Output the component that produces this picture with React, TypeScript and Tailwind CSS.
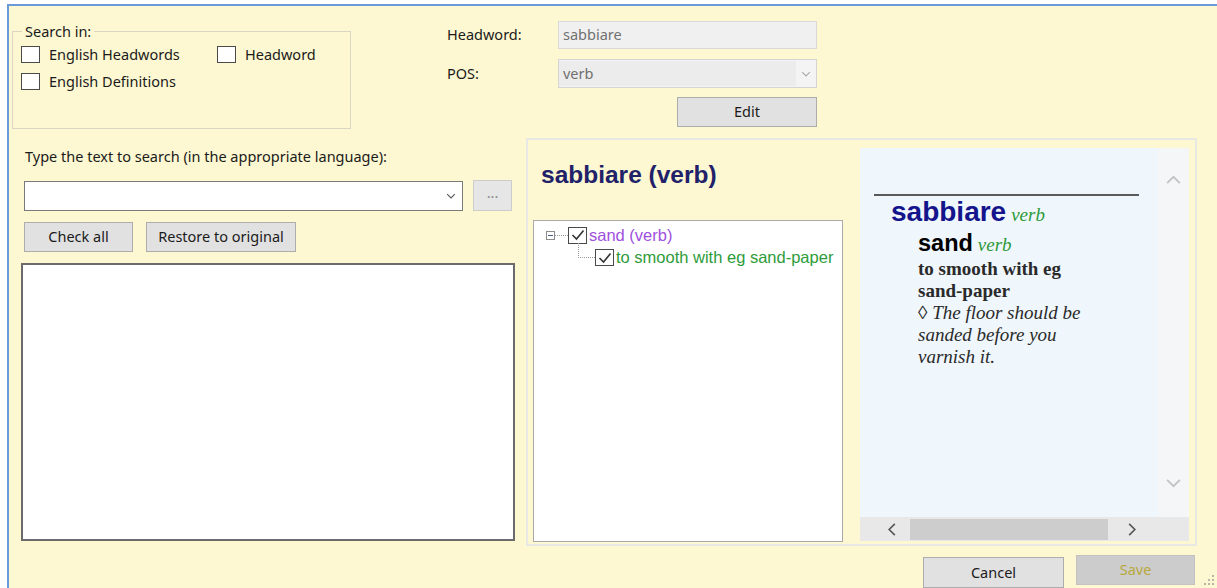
import type { ReactNode } from "react";

// little drawings used by the form controls
function Chevron({ dir, className }: { dir: "up" | "down" | "left" | "right"; className?: string }) {
  const pts = {
    up: "1,9 8,2 15,9",
    down: "1,2 8,9 15,2",
    left: "9,1 2,8 9,15",
    right: "2,1 9,8 2,15",
  }[dir];
  const box = dir === "up" || dir === "down" ? "0 0 16 11" : "0 0 11 16";
  return (
    <svg viewBox={box} className={className} fill="none" stroke="currentColor" strokeWidth={2}>
      <polyline points={pts} />
    </svg>
  );
}

function CheckBox({ checked = false }: { checked?: boolean }) {
  return (
    <span className="inline-flex h-[17px] w-[19px] shrink-0 items-center justify-center border border-[#4a4a4a] bg-white">
      {checked && (
        <svg viewBox="0 0 14 12" className="h-[12px] w-[14px]" fill="none" stroke="#333" strokeWidth={1.6}>
          <polyline points="1.5,6 5.5,10 12.5,1.5" />
        </svg>
      )}
    </span>
  );
}

function Option({ label }: { label: string }) {
  return (
    <label className="flex h-[27px] items-center gap-[9px]">
      <CheckBox />
      <span>{label}</span>
    </label>
  );
}

function Button({ children, className }: { children: ReactNode; className: string }) {
  return (
    <button className={`flex items-center justify-center border border-[#adadad] bg-[#e1e1e1] ${className}`}>
      {children}
    </button>
  );
}

function Grip() {
  const dots = [
    [8, 0],
    [4, 4],
    [8, 4],
    [0, 8],
    [4, 8],
    [8, 8],
  ];
  return (
    <svg viewBox="0 0 10 10" className="absolute bottom-[3px] right-[3px] h-[10px] w-[10px]">
      {dots.map(([x, y], i) => (
        <rect key={i} x={x} y={y} width={2} height={2} fill="#b5b5a8" />
      ))}
    </svg>
  );
}

export default function App() {
  return (
    <div className="h-[588px] w-[1217px] overflow-hidden bg-white font-['Noto_Sans',sans-serif] text-[14.5px] text-[#1b1b1b]">
      <div className="relative ml-[7px] mt-[4px] h-[584px] border-l-2 border-t-2 border-[#6b9ad8] bg-[#fdf8d1]">
        {/* search options + headword fields */}
        <div className="flex items-start">
          <fieldset className="m-0 ml-[3px] mt-[15px] h-[108px] w-[339px] min-w-0 border border-[#d9d6c2] p-0">
            <legend className="ml-[9px] px-[3px] leading-[20px]">Search in:</legend>
            <div className="grid grid-cols-[196px_auto] pl-[8px]">
              <Option label="English Headwords" />
              <Option label="Headword" />
              <Option label="English Definitions" />
            </div>
          </fieldset>

          <div className="ml-[96px] mt-[15px] flex flex-col">
            <div className="flex h-[28px] items-center">
              <span className="w-[111px]">Headword:</span>
              <div className="flex h-[28px] w-[259px] items-center border border-[#d9d9d9] bg-[#f0f0f0] pl-[4px] text-[#707070]">
                sabbiare
              </div>
            </div>
            <div className="mt-[10px] flex h-[29px] items-center">
              <span className="w-[111px]">POS:</span>
              <div className="flex h-[29px] w-[259px] items-center border border-[#d4d4d4] bg-[#f4f4f4]">
                <span className="flex h-[25px] flex-1 items-center bg-[#ececec] pl-[4px] text-[#707070]">verb</span>
                <span className="flex w-[20px] justify-center text-[#a8a8a8]">
                  <Chevron dir="down" className="h-[6px] w-[10px]" />
                </span>
              </div>
            </div>
            <Button className="mt-[9px] h-[30px] w-[140px] self-end">Edit</Button>
          </div>
        </div>

        {/* search box and results */}
        <div className="mt-[9px] flex items-start">
          <div className="ml-[12px] flex w-[494px] flex-col">
            <span className="mt-[8px] pl-[4px] leading-[20px]">Type the text to search (in the appropriate language):</span>
            <div className="mt-[15px] flex items-center">
              <div className="ml-[3px] flex h-[30px] w-[439px] items-center justify-end border border-[#7a7a7a] bg-white pr-[6px] text-[#555]">
                <Chevron dir="down" className="h-[6px] w-[10px]" />
              </div>
              <button className="ml-[10px] -mt-[2px] flex h-[31px] w-[39px] items-center justify-center border border-[#cccccc] bg-[#e6e6e6] pb-[4px] text-[#8a8a8a]">
                ...
              </button>
            </div>
            <div className="mt-[11px] flex gap-[13px] pl-[3px]">
              <Button className="h-[30px] w-[109px]">Check all</Button>
              <Button className="h-[30px] w-[150px]">Restore to original</Button>
            </div>
            <div className="mt-[11px] h-[278px] w-full border-2 border-[#6b6b6b] bg-white" />
          </div>

          <div className="ml-[11px] flex h-[408px] w-[671px] border-2 border-[#e8e8e4]">
            <div className="flex w-[315px] flex-col pl-[5px]">
              <div className="ml-[8px] mt-[20px] flex h-[30px] items-center font-['Liberation_Sans',sans-serif] text-[24.5px] font-bold text-[#21216a]">
                sabbiare (verb)
              </div>
              <div className="mt-[30px] h-[322px] w-[310px] border border-[#a9a9a9] bg-white pt-[3px] font-['Liberation_Sans',sans-serif] text-[16.5px]">
                <div className="flex h-[22px] items-center pl-[12px]">
                  <span className="flex h-[9px] w-[9px] items-center justify-center border border-[#8c8c8c]">
                    <span className="h-px w-[5px] bg-[#4a5e8a]" />
                  </span>
                  <span className="w-[13px] border-t border-dotted border-[#9a9a9a]" />
                  <CheckBox checked />
                  <span className="ml-[2px] text-[#a050de]">sand (verb)</span>
                </div>
                <div className="flex h-[23px] items-center pl-[44px]">
                  <span className="-mt-[3px] h-[15px] w-[17px] self-start border-b border-l border-dotted border-[#9a9a9a]" />
                  <CheckBox checked />
                  <span className="ml-[2px] text-[#2e9b3a]">to smooth with eg sand-paper</span>
                </div>
              </div>
            </div>

            {/* rendered entry preview */}
            <div className="ml-[17px] mt-[8px] flex h-[393px] w-[329px] flex-col bg-[#eff6fc]">
              <div className="flex flex-1">
                <div className="flex-1 pl-[14px] pt-[46px]">
                  <div className="h-[2px] w-[265px] bg-[#5a5a5a]" />
                  <div className="pl-[17px] leading-[32px]">
                    <span className="font-['Liberation_Sans',sans-serif] text-[28px] font-bold text-[#14148c]">sabbiare</span>
                    <span className="ml-[5px] font-['Liberation_Serif',serif] text-[19px] italic text-[#2e9b3a]">verb</span>
                  </div>
                  <div className="-mt-px pl-[44px] leading-[26px]">
                    <span className="font-['Liberation_Sans',sans-serif] text-[23.5px] font-bold text-black">sand</span>
                    <span className="ml-[5px] font-['Liberation_Serif',serif] text-[19px] italic text-[#2e9b3a]">verb</span>
                  </div>
                  <div className="pl-[44px] font-['Liberation_Serif',serif] text-[19px] leading-[22px] text-[#2a2a2a]">
                    <div className="font-bold">to smooth with eg</div>
                    <div className="font-bold">sand-paper</div>
                    <div className="italic">◊ The floor should be</div>
                    <div className="italic">sanded before you</div>
                    <div className="italic">varnish it.</div>
                  </div>
                </div>
                <div className="flex w-[31px] flex-col items-center justify-between bg-[#f4f6f8] pb-[29px] pt-[27px] text-[#c2c2c2]">
                  <Chevron dir="up" className="h-[10px] w-[15px]" />
                  <Chevron dir="down" className="h-[10px] w-[15px]" />
                </div>
              </div>
              <div className="flex h-[24px] items-center bg-[#e8e8e8] pl-[27px] text-[#555]">
                <Chevron dir="left" className="h-[13px] w-[10px]" />
                <div className="ml-[13px] h-[21px] w-[198px] bg-[#cdcdcd]" />
                <Chevron dir="right" className="ml-[19px] h-[13px] w-[10px]" />
              </div>
            </div>
          </div>
        </div>

        {/* dialog buttons */}
        <div className="mt-[9px] flex items-start justify-end gap-[12px] pr-[22px]">
          <Button className="mt-[2px] h-[31px] w-[141px]">Cancel</Button>
          <button className="flex h-[30px] w-[119px] items-center justify-center border border-[#c2c2c2] bg-[#cccccc] text-[#b9a83c]">
            Save
          </button>
        </div>
        <Grip />
      </div>
    </div>
  );
}
